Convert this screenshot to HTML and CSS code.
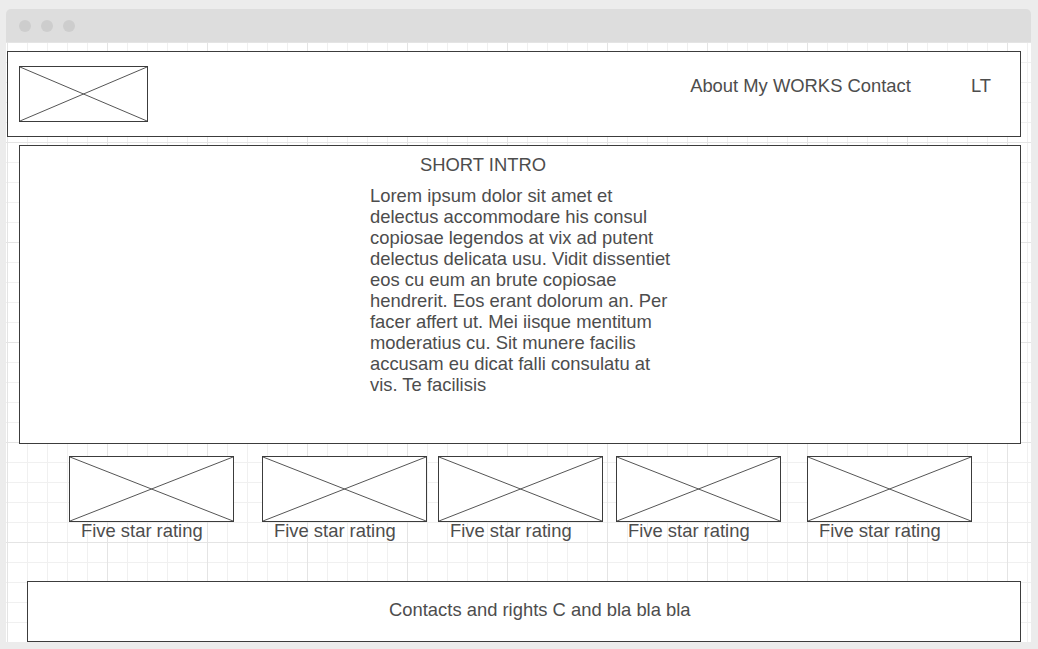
FILE: index.html
```html
<!DOCTYPE html>
<html lang="en">
<head>
<meta charset="utf-8">
<title>Wireframe</title>
<link rel="stylesheet" href="styles.css">
</head>
<body>
<div class="window">
  <div class="titlebar">
    <span class="dot"></span><span class="dot"></span><span class="dot"></span>
  </div>
  <div class="canvas">
    <header class="header">
      <div class="ph logo">
        <svg viewBox="0 0 100 100" preserveAspectRatio="none"><line x1="0" y1="0" x2="100" y2="100" vector-effect="non-scaling-stroke"/><line x1="0" y1="100" x2="100" y2="0" vector-effect="non-scaling-stroke"/></svg>
      </div>
      <nav class="nav">About My WORKS Contact</nav>
      <span class="lang">LT</span>
    </header>

    <section class="intro">
      <h1 class="intro-title">SHORT INTRO</h1>
      <p class="intro-text">Lorem ipsum dolor sit amet et delectus accommodare his consul copiosae legendos at vix ad putent delectus delicata usu. Vidit dissentiet eos cu eum an brute copiosae hendrerit. Eos erant dolorum an. Per facer affert ut. Mei iisque mentitum moderatius cu. Sit munere facilis accusam eu dicat falli consulatu at vis. Te facilisis</p>
    </section>

    <section class="works">
      <div class="card">
        <div class="ph thumb"><svg viewBox="0 0 100 100" preserveAspectRatio="none"><line x1="0" y1="0" x2="100" y2="100" vector-effect="non-scaling-stroke"/><line x1="0" y1="100" x2="100" y2="0" vector-effect="non-scaling-stroke"/></svg></div>
        <div class="label">Five star rating</div>
      </div>
      <div class="card">
        <div class="ph thumb"><svg viewBox="0 0 100 100" preserveAspectRatio="none"><line x1="0" y1="0" x2="100" y2="100" vector-effect="non-scaling-stroke"/><line x1="0" y1="100" x2="100" y2="0" vector-effect="non-scaling-stroke"/></svg></div>
        <div class="label">Five star rating</div>
      </div>
      <div class="card">
        <div class="ph thumb"><svg viewBox="0 0 100 100" preserveAspectRatio="none"><line x1="0" y1="0" x2="100" y2="100" vector-effect="non-scaling-stroke"/><line x1="0" y1="100" x2="100" y2="0" vector-effect="non-scaling-stroke"/></svg></div>
        <div class="label">Five star rating</div>
      </div>
      <div class="card">
        <div class="ph thumb"><svg viewBox="0 0 100 100" preserveAspectRatio="none"><line x1="0" y1="0" x2="100" y2="100" vector-effect="non-scaling-stroke"/><line x1="0" y1="100" x2="100" y2="0" vector-effect="non-scaling-stroke"/></svg></div>
        <div class="label">Five star rating</div>
      </div>
      <div class="card">
        <div class="ph thumb"><svg viewBox="0 0 100 100" preserveAspectRatio="none"><line x1="0" y1="0" x2="100" y2="100" vector-effect="non-scaling-stroke"/><line x1="0" y1="100" x2="100" y2="0" vector-effect="non-scaling-stroke"/></svg></div>
        <div class="label">Five star rating</div>
      </div>
    </section>

    <footer class="footer">Contacts and rights C and bla bla bla</footer>
  </div>
</div>
</body>
</html>
```

FILE: styles.css
```css
html, body {
  margin: 0;
  padding: 0;
  background: #ececec;
}

body {
  font-family: "Liberation Sans", Arial, sans-serif;
  font-size: 18.4px;
  line-height: 21px;
  color: #4d4d4d;
}

.window {
  margin: 9px 0 0 6px;
  width: 1025px;
}

.titlebar {
  height: 33px;
  background: #dddddd;
  border-radius: 5px 5px 0 0;
  display: flex;
  align-items: center;
  gap: 10px;
  padding-left: 13px;
  box-sizing: border-box;
}

.dot {
  width: 12px;
  height: 12px;
  border-radius: 50%;
  background: #cdcdcd;
}

.canvas {
  height: 600px;
  box-sizing: border-box;
  overflow: hidden;
  background-color: #ffffff;
  background-image:
    linear-gradient(to right, #e4e4e4 1px, transparent 1px),
    linear-gradient(to bottom, #e4e4e4 1px, transparent 1px),
    linear-gradient(to right, #f0f0f0 1px, transparent 1px),
    linear-gradient(to bottom, #f0f0f0 1px, transparent 1px);
  background-size: 100px 100px, 100px 100px, 20px 20px, 20px 20px;
  background-position: 1px 0, 0 0, 1px 0, 0 0;
  padding-top: 9px;
}

.ph {
  box-sizing: border-box;
  border: 1px solid #3c3c3c;
  background: #ffffff;
}

.ph svg {
  display: block;
  width: 100%;
  height: 100%;
}

.ph line {
  stroke: #555555;
  stroke-width: 1;
}

.header {
  box-sizing: border-box;
  height: 86px;
  margin: 0 10px 0 1px;
  border: 1px solid #3c3c3c;
  background: #ffffff;
  display: flex;
  align-items: flex-start;
}

.logo {
  width: 129px;
  height: 56px;
  margin: 14px 0 0 11px;
}

.nav {
  margin: 23px 0 0 auto;
  white-space: nowrap;
}

.lang {
  margin: 23px 29px 0 60px;
}

.intro {
  box-sizing: border-box;
  height: 299px;
  margin: 8px 10px 0 13px;
  border: 1px solid #3c3c3c;
  background: #ffffff;
  padding-top: 8px;
}

.intro-title {
  margin: 0 0 0 400px;
  font-size: inherit;
  font-weight: normal;
  line-height: 21px;
}

.intro-text {
  margin: 10px 0 0 350px;
  width: 305px;
}

.works {
  display: flex;
  margin: 12px 0 0 63px;
}

.card {
  width: 165px;
}

.card:nth-child(2) { margin-left: 28px; }
.card:nth-child(3) { margin-left: 11px; }
.card:nth-child(4) { margin-left: 13px; }
.card:nth-child(5) { margin-left: 26px; }

.thumb {
  width: 165px;
  height: 66px;
}

.label {
  margin-top: -2px;
  padding-left: 12px;
  white-space: nowrap;
}

.footer {
  box-sizing: border-box;
  height: 61px;
  margin: 40px 10px 0 21px;
  border: 1px solid #3c3c3c;
  background: #ffffff;
  padding: 17px 0 0 361px;
}
```
